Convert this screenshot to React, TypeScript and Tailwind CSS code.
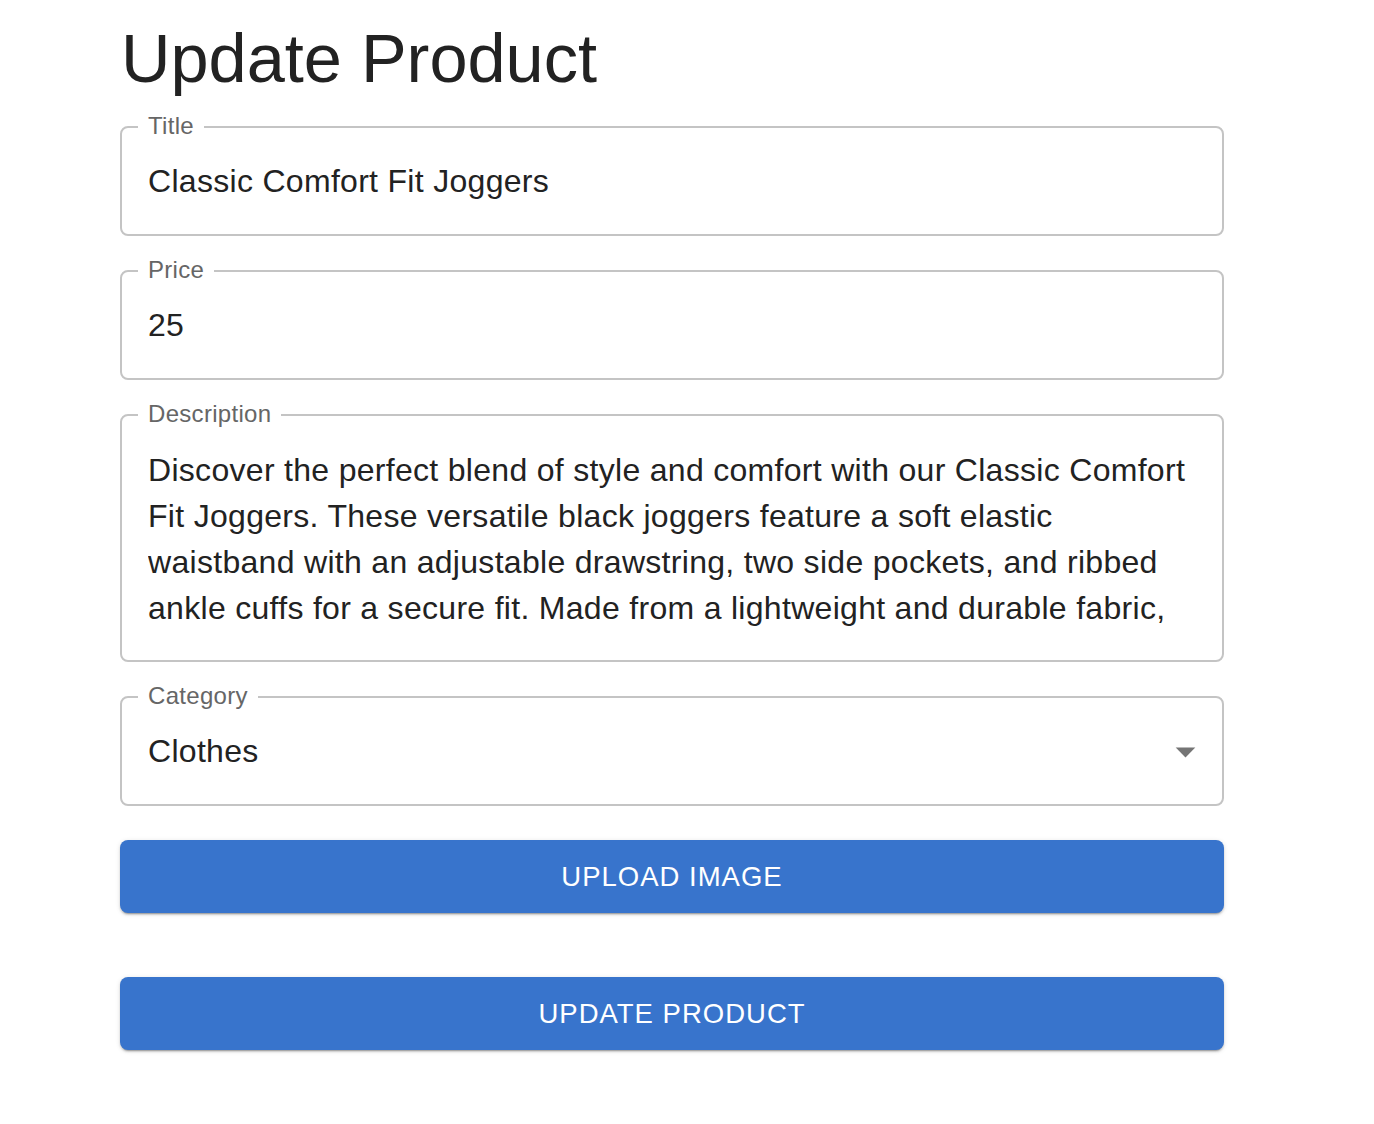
import React, { useState } from 'react';

const font = { fontFamily: '"Liberation Sans", Arial, Helvetica, sans-serif' };

const description =
  'Discover the perfect blend of style and comfort with our Classic Comfort Fit Joggers. These versatile black joggers feature a soft elastic waistband with an adjustable drawstring, two side pockets, and ribbed ankle cuffs for a secure fit. Made from a lightweight and durable fabric, these joggers are perfect for both active days and relaxed lounging.';

const OutlinedField = ({ label, children, tall = false }: { label: string; children: React.ReactNode; tall?: boolean }) => (
  <div
    className={`relative rounded-lg border-2 border-[#c4c4c4] ${
      tall ? 'h-[248px] pt-[31px] pl-[26px] pr-[26px]' : 'flex h-[110px] items-center px-[26px]'
    }`}
  >
    <span className="absolute -top-[14px] left-[16px] bg-white px-[10px] text-[24px] leading-[24px] tracking-[0.3px] text-[#666666]">
      {label}
    </span>
    {children}
  </div>
);

const App = () => {
  const [title, setTitle] = useState('Classic Comfort Fit Joggers');
  const [price, setPrice] = useState('25');
  const [desc, setDesc] = useState(description);

  return (
    <div className="min-h-screen bg-white" style={font}>
      <div className="ml-[120px] w-[1104px] pt-[25px]">
        <h1 className="ml-[1px] text-[68.5px] leading-[68px] font-normal text-[#222222]">Update Product</h1>

        <div className="mt-[33px] flex flex-col gap-[34px]">
          <OutlinedField label="Title">
            <input
              value={title}
              onChange={(e) => setTitle(e.target.value)}
              className="w-full bg-transparent text-[32px] leading-[38px] tracking-[0.3px] text-[#222222] outline-none"
              style={font}
            />
          </OutlinedField>

          <OutlinedField label="Price">
            <input
              value={price}
              onChange={(e) => setPrice(e.target.value)}
              className="w-full bg-transparent text-[32px] leading-[38px] tracking-[0.3px] text-[#222222] outline-none"
              style={font}
            />
          </OutlinedField>

          <OutlinedField label="Description" tall>
            <textarea
              value={desc}
              onChange={(e) => setDesc(e.target.value)}
              rows={4}
              className="block h-[184px] w-full resize-none overflow-hidden bg-transparent text-[32px] leading-[46px] tracking-[0.3px] text-[#222222] outline-none"
              style={font}
            />
          </OutlinedField>

          <OutlinedField label="Category">
            <div className="flex w-full items-center justify-between">
              <span className="text-[32px] leading-[38px] tracking-[0.3px] text-[#222222]">Clothes</span>
              <svg width="47" height="47" viewBox="0 0 24 24" className="-mr-[13px]" fill="#757575">
                <path d="M7 10l5 5 5-5z" />
              </svg>
            </div>
          </OutlinedField>
        </div>

        <button className="mt-[34px] flex h-[73px] w-full items-center justify-center rounded-lg bg-[#3874cc] text-[27.5px] tracking-[1px] text-white shadow-[0_3px_1px_-2px_rgba(0,0,0,0.2),0_2px_2px_0_rgba(0,0,0,0.14),0_1px_5px_0_rgba(0,0,0,0.12)]">
          UPLOAD IMAGE
        </button>

        <button className="mt-[64px] flex h-[73px] w-full items-center justify-center rounded-lg bg-[#3874cc] text-[27.5px] tracking-[1px] text-white shadow-[0_3px_1px_-2px_rgba(0,0,0,0.2),0_2px_2px_0_rgba(0,0,0,0.14),0_1px_5px_0_rgba(0,0,0,0.12)]">
          UPDATE PRODUCT
        </button>
      </div>
    </div>
  );
};

export default App;
